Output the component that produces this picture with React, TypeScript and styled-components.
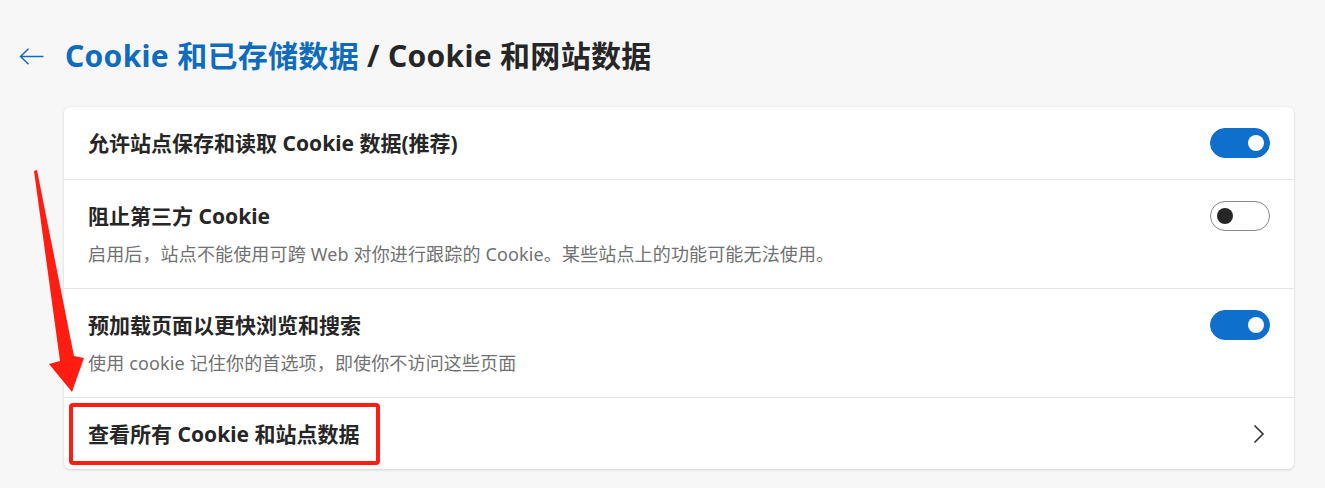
import styled, { createGlobalStyle } from "styled-components";

const GlobalStyle = createGlobalStyle`
  html, body {
    margin: 0;
    padding: 0;
    background-color: #f7f7f7;
  }

  body {
    font-family: "Noto Sans", "Noto Sans CJK SC", sans-serif;
    color: #262626;
  }
`;

const Page = styled.div`
  position: relative;
  width: 1325px;
  height: 488px;
  box-sizing: border-box;
  padding: 36px 31px 0 19px;
  overflow: hidden;
`;

const Header = styled.div`
  display: flex;
  align-items: center;
  gap: 21px;
  height: 40px;
`;

const BackButton = styled.button`
  display: flex;
  align-items: center;
  padding: 0;
  border: none;
  background: transparent;
  color: #0f6cbd;
  cursor: pointer;
`;

const Heading = styled.h1`
  margin: 0;
  font-size: 30px;
  line-height: 40px;
  font-weight: 700;
  letter-spacing: 0.3px;
  color: #262626;
  white-space: nowrap;
`;

const Crumb = styled.span`
  color: #0f6cbd;
`;

const Card = styled.div`
  margin: 31px 0 0 45px;
  background-color: #ffffff;
  border-radius: 6px;
  box-shadow: 0 1px 3px rgba(0, 0, 0, 0.14), 0 0 1px rgba(0, 0, 0, 0.08);
`;

const Row = styled.div<{ $last?: boolean }>`
  position: relative;
  display: flex;
  align-items: flex-start;
  justify-content: space-between;
  gap: 24px;
  padding: 22px 24px 21px;
  border-bottom: ${({ $last }) => ($last ? "none" : "1px solid #e6e6e6")};
  cursor: ${({ $last }) => ($last ? "pointer" : "default")};
`;

const TextBlock = styled.div`
  display: flex;
  flex-direction: column;
  gap: 11px;
`;

const Title = styled.div`
  font-size: 21px;
  line-height: 28px;
  font-weight: 700;
  color: #262626;
`;

const Description = styled.div`
  font-size: 18px;
  line-height: 26px;
  letter-spacing: 0.15px;
  color: #717171;
`;

const Toggle = styled.span<{ $on?: boolean }>`
  position: relative;
  flex: none;
  width: 60px;
  height: 30px;
  margin-top: -1px;
  box-sizing: border-box;
  border-radius: 15px;
  background-color: ${({ $on }) => ($on ? "#0f6fcc" : "#ffffff")};
  border: 1px solid ${({ $on }) => ($on ? "#0f6fcc" : "#8a8a8a")};

  &::after {
    content: "";
    position: absolute;
    top: 6px;
    left: ${({ $on }) => ($on ? "37px" : "6px")};
    width: 16px;
    height: 16px;
    border-radius: 50%;
    background-color: ${({ $on }) => ($on ? "#ffffff" : "#262626")};
  }
`;

const Chevron = styled.svg`
  flex: none;
  margin-top: 2px;
  color: #333333;
`;

// red annotation drawn over the screenshot
const Highlight = styled.span`
  position: absolute;
  left: 5px;
  top: 5px;
  width: 311px;
  height: 62px;
  box-sizing: border-box;
  border: 4px solid #ff1d12;
  border-radius: 4px;
  pointer-events: none;
`;

const Pointer = styled.svg`
  position: absolute;
  left: 0;
  top: 0;
  pointer-events: none;
`;

const settings = [
  {
    title: "允许站点保存和读取 Cookie 数据(推荐)",
    on: true,
  },
  {
    title: "阻止第三方 Cookie",
    description:
      "启用后，站点不能使用可跨 Web 对你进行跟踪的 Cookie。某些站点上的功能可能无法使用。",
    on: false,
  },
  {
    title: "预加载页面以更快浏览和搜索",
    description: "使用 cookie 记住你的首选项，即使你不访问这些页面",
    on: true,
  },
];

export default function App() {
  return (
    <>
      <GlobalStyle />
      <Page>
        <Header>
          <BackButton aria-label="返回">
            <svg width="25" height="17" viewBox="0 0 25 17" fill="none">
              <path
                d="M1.5 8.5H24.5M9.5 0.8L1.5 8.5L9.5 16.2"
                stroke="currentColor"
                strokeWidth="1.5"
              />
            </svg>
          </BackButton>
          <Heading>
            <Crumb>Cookie 和已存储数据</Crumb> / Cookie 和网站数据
          </Heading>
        </Header>

        <Card>
          {settings.map((item) => (
            <Row key={item.title}>
              <TextBlock>
                <Title>{item.title}</Title>
                {item.description && (
                  <Description>{item.description}</Description>
                )}
              </TextBlock>
              <Toggle $on={item.on} />
            </Row>
          ))}
          <Row $last>
            <Title>查看所有 Cookie 和站点数据</Title>
            <Chevron width="24" height="24" viewBox="0 0 24 24" fill="none">
              <path d="M8.5 3.5L17 12L8.5 20.5" stroke="currentColor" strokeWidth="1.6" />
            </Chevron>
            <Highlight />
          </Row>
        </Card>

        <Pointer width="100" height="400" viewBox="0 0 100 400">
          <polygon
            points="34,171 37,170 74,356 84,358 72,392 49,364 60,361"
            fill="#ff1d12"
          />
        </Pointer>
      </Page>
    </>
  );
}
